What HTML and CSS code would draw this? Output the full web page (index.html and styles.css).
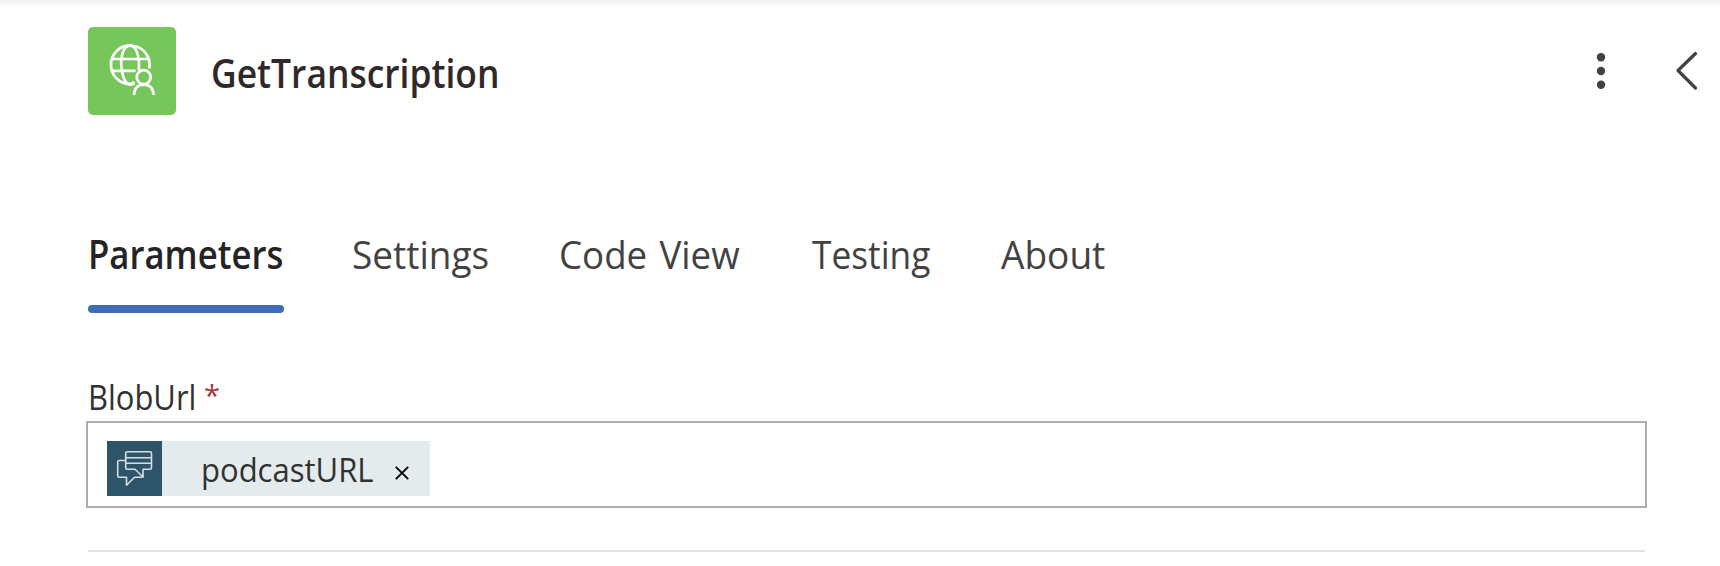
FILE: index.html
```html
<!DOCTYPE html>
<html lang="en">
<head>
<meta charset="utf-8">
<title>GetTranscription</title>
<link rel="stylesheet" href="styles.css">
</head>
<body>
<main class="panel">
  <header class="header">
    <div class="connector-icon">
      <svg viewBox="0 0 88 88" width="88" height="88" fill="none" stroke="#fff" stroke-width="2.700">
        <path d="M61.200 41.500A19.300 19.300 0 1 0 46.500 56.600"/>
        <path d="M50.800 43.500C51.600 32 49.500 18.700 42 18.700C34.500 18.700 32 32 33.800 43.500C35.200 51.500 38 57.300 42 57.300Q44.500 57.200 46 54.500"/>
        <path d="M24 32H60M24 43.800H47.500"/>
        <circle cx="55.700" cy="50.200" r="7"/>
        <path d="M46 68C46.400 61.500 50 57.700 55.800 57.700S65.200 61.500 65.600 68"/>
      </svg>
    </div>
    <h1 class="title"><span class="label">GetTranscription</span></h1>
    <button class="icon-button more" aria-label="More commands">
      <svg viewBox="0 0 12 40" width="12" height="40" fill="#424242"><circle cx="6" cy="6.300" r="4.200"/><circle cx="6" cy="20" r="4.200"/><circle cx="6" cy="33.700" r="4.200"/></svg>
    </button>
    <button class="icon-button collapse" aria-label="Collapse">
      <svg viewBox="0 0 24 40" width="24" height="40" fill="none" stroke="#424242" stroke-width="3.200" stroke-linecap="round" stroke-linejoin="round"><path d="M20.500 2.500L3 19.500L20.500 37"/></svg>
    </button>
  </header>
  <nav class="tabs">
    <a class="tab active"><span class="label">Parameters</span></a>
    <a class="tab settings"><span class="label">Settings</span></a>
    <a class="tab code"><span class="label">Code View</span></a>
    <a class="tab testing"><span class="label">Testing</span></a>
    <a class="tab about"><span class="label">About</span></a>
  </nav>
  <section class="field">
    <div class="field-label"><span class="field-name label">BlobUrl</span><span class="required">*</span></div>
    <div class="input">
      <div class="token">
        <div class="token-icon">
          <svg viewBox="0 0 55 55" width="55" height="55" fill="none" stroke="#d5dfe3" stroke-width="1.600" stroke-linejoin="round">
            <path d="M20 10.700H43Q44.500 10.700 44.500 12.200V26.700Q44.500 28.200 43 28.200H36V36L28 28.200H20Q18.700 28.200 18.700 26.700V12.200Q18.700 10.700 20 10.700ZM18.700 16.700H44.500M18.700 22.300H44.500"/>
            <path d="M18.700 19.500H12.300Q10.700 19.500 10.700 21V34.800Q10.700 36.300 12.300 36.300H19.500V44.300L27.500 36.300H34.500Q36 36.300 36 34.500"/>
          </svg>
        </div>
        <span class="token-text"><span class="label">podcastURL</span></span>
        <svg class="token-remove" viewBox="0 0 14 14" width="14" height="14" stroke="#000" stroke-width="1.900"><path d="M.8.800L13.200 13.200M13.200.800L.800 13.200"/></svg>
      </div>
    </div>
  </section>
  <hr class="divider">
</main>
</body>
</html>
```
FILE: styles.css
```css
* { box-sizing: border-box; }
body {
  margin: 0;
  background: #fff;
  color: #424242;
  font-family: "Open Sans", "Noto Sans", sans-serif;
}
.panel {
  height: 566px;
  padding: 27px 73px 0 88px;
  background: linear-gradient(#f1f1f1, #fff 9px);
  overflow: hidden;
}
/* Slightly condensed lettering */
.label { display: inline-block; transform: scaleX(.94); transform-origin: 0 50%; }
.header { display: flex; height: 88px; margin-right: -73px; }
.connector-icon {
  width: 88px;
  height: 88px;
  border-radius: 5px;
  background: #76c65b;
}
.title {
  flex: 1;
  margin: 18px 0 0 35px;
  color: #2f292a;
  font-size: 39px;
  line-height: 56px;
  font-weight: 600;
  white-space: nowrap;
}
.title .label { transform: scaleX(.908); }
.icon-button { display: block; padding: 0; border: 0; background: none; }
.icon-button svg { display: block; }
.more { width: 12px; height: 40px; margin-top: 24px; }
.collapse { width: 24px; height: 40px; margin: 24px 21px 0 68px; }
.tabs { display: flex; height: 90px; margin-top: 111px; }
.tab {
  flex: none;
  height: 90px;
  font-size: 39px;
  line-height: 56px;
  white-space: nowrap;
}
.active { width: 196px; color: #242424; font-weight: 600; }
.active .label { display: block; transform: scaleX(.89); }
.active::after {
  content: "";
  display: block;
  height: 8px;
  margin-top: 23px;
  border-radius: 4px;
  background: #406bb9;
}
.settings { width: 207px; padding-left: 68px; }
.settings .label { transform: scaleX(.948); }
.code { width: 253px; padding-left: 68px; }
.code .label { word-spacing: 3px; }
.testing { width: 189px; padding-left: 68px; }
.testing .label { transform: scaleX(.905); }
.about { padding-left: 68px; }
.about .label { transform: scaleX(.95); }
.field { margin: 59px 0 0 -2px; width: 1561px; }
.field-label {
  display: flex;
  height: 46px;
  padding-left: 2px;
  color: #323130;
  font-size: 34px;
  line-height: 44px;
}
.field-name { width: 116px; transform: scaleX(.91); }
.required { color: #a4373a; font-size: 29px; line-height: 40px; }
.input {
  height: 87px;
  padding: 18px 19px;
  border: 2px solid #adadad;
  background: #fff;
}
.token {
  display: flex;
  width: 323px;
  height: 55px;
  background: #e4ebed;
}
.token-icon { width: 55px; height: 55px; background: #2d5468; }
.token-icon svg { display: block; }
.token-text {
  width: 192px;
  padding-left: 39px;
  color: #323130;
  font-size: 33px;
  line-height: 58px;
  white-space: nowrap;
}
.token-remove { margin: 25px 0 0 41px; }
.divider { height: 2px; margin: 42px 2px 0 0; border: 0; background: #e1e1e1; }
```
